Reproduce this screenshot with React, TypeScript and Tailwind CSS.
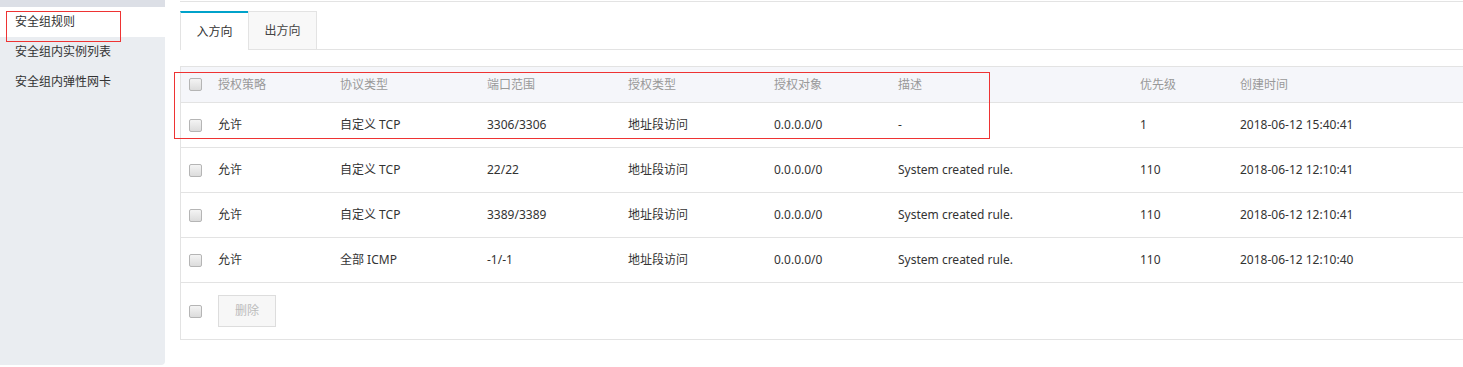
import React from "react";

const font = { fontFamily: '"Noto Sans", "Noto Sans CJK SC", sans-serif' };

const cols = ["w-[37px]", "w-[122px]", "w-[147px]", "w-[141px]", "w-[146px]", "w-[124px]", "w-[242px]", "w-[100px]", "flex-1"];

function Check() {
  return (
    <span className="block w-[13px] h-[13px] rounded-[2px] border border-[#b5b5b5] bg-gradient-to-b from-[#f4f4f4] to-[#dcdcdc]" />
  );
}

const rows = [
  ["允许", "自定义 TCP", "3306/3306", "地址段访问", "0.0.0.0/0", "-", "1", "2018-06-12 15:40:41"],
  ["允许", "自定义 TCP", "22/22", "地址段访问", "0.0.0.0/0", "System created rule.", "110", "2018-06-12 12:10:41"],
  ["允许", "自定义 TCP", "3389/3389", "地址段访问", "0.0.0.0/0", "System created rule.", "110", "2018-06-12 12:10:41"],
  ["允许", "全部 ICMP", "-1/-1", "地址段访问", "0.0.0.0/0", "System created rule.", "110", "2018-06-12 12:10:40"],
];

const headers = ["授权策略", "协议类型", "端口范围", "授权类型", "授权对象", "描述", "优先级", "创建时间"];

export default function App() {
  return (
    <div className="relative flex w-[1463px] h-[367px] bg-white overflow-hidden text-[12px]" style={font}>
      {/* Sidebar */}
      <div className="w-[165px] h-[365px] shrink-0 bg-[#eaedf1] rounded-br-[4px] flex flex-col">
        <div className="h-[7px] bg-[#dcdfe6]" />
        <div className="h-[30px] bg-white flex items-center pl-[15px] text-[#333]">安全组规则</div>
        <div className="h-[30px] flex items-center pl-[15px] text-[#333]">安全组内实例列表</div>
        <div className="h-[30px] flex items-center pl-[15px] text-[#333]">安全组内弹性网卡</div>
      </div>

      {/* Main */}
      <div className="flex-1 pl-[15px] flex flex-col">
        <div className="mt-[1px] border-t border-[#e3e3e3]" />
        {/* Tabs */}
        <div className="mt-[9px] flex h-[39px] border-b border-[#e3e3e3]">
          <div className="w-[68px] h-[39px] -mb-px bg-white border-l border-[#e3e3e3] border-t-2 border-t-[#00a2ca] flex items-center justify-center text-[#333]">
            入方向
          </div>
          <div className="w-[69px] h-[38px] bg-[#f8f8f8] border-t border-r border-l border-[#e3e3e3] flex items-center justify-center text-[#444]">
            出方向
          </div>
        </div>

        {/* Table */}
        <div className="mt-[16px] border-t border-l border-b border-[#e3e3e3]">
          <div className="flex h-[36px] bg-[#f5f6fa] border-b border-[#e3e3e3] items-center text-[#999]">
            <div className={`${cols[0]} shrink-0 pl-[8px]`}><Check /></div>
            {headers.map((h, i) => (
              <div key={h} className={`${cols[i + 1]} shrink-0`}>{h}</div>
            ))}
          </div>
          {rows.map((r, ri) => (
            <div key={ri} className="flex h-[45px] border-b border-[#e3e3e3] items-center text-[#333]">
              <div className={`${cols[0]} shrink-0 pl-[8px]`}><Check /></div>
              {r.map((c, i) => (
                <div key={i} className={`${cols[i + 1]} shrink-0`}>{c}</div>
              ))}
            </div>
          ))}
          <div className="flex h-[56px] items-center">
            <div className={`${cols[0]} shrink-0 pl-[8px]`}><Check /></div>
            <button className="w-[58px] h-[32px] bg-[#f7f7f7] border border-[#dddddd] text-[#bbb] text-[12px]">删除</button>
          </div>
        </div>
      </div>

      {/* Red annotation boxes */}
      <div className="absolute left-[6px] top-[11px] w-[115px] h-[31px] border border-[#ee3333] pointer-events-none" />
      <div className="absolute left-[174px] top-[72px] w-[816px] h-[67px] border border-[#ee3333] pointer-events-none" />
    </div>
  );
}
